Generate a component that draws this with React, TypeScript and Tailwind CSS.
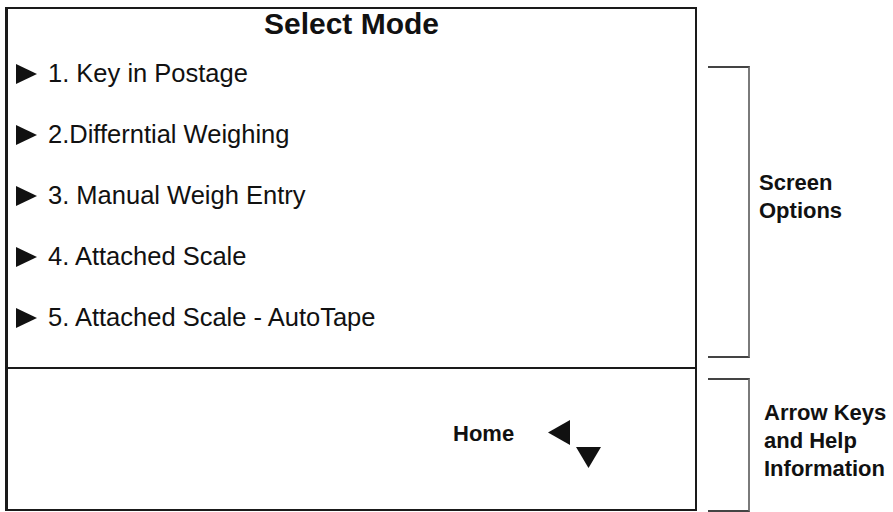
const items = [
  '1. Key in Postage',
  '2.Differntial Weighing',
  '3. Manual Weigh Entry',
  '4. Attached Scale',
  '5. Attached Scale - AutoTape',
];

const Pointer = () => (
  <svg width="21" height="20" viewBox="0 0 21 20" className="shrink-0">
    <polygon points="0,0 21,10 0,20" fill="#111" />
  </svg>
);

export default function App() {
  return (
    <div className="flex items-start w-[893px] h-[512px] bg-white overflow-hidden text-[#111] font-['Liberation_Sans',Arial,sans-serif]">
      {/* Device screen */}
      <div className="ml-[5px] mt-[7px] w-[692px] h-[504px] flex flex-col border-2 border-l-[3px] border-[#1a1a1a]">
        <div className="h-[360px] border-b-2 border-[#1a1a1a]">
          <h1 className="text-[30px] leading-[29px] font-bold text-center">Select Mode</h1>
          <ul className="mt-[5px] flex flex-col">
            {items.map((item) => (
              <li key={item} className="h-[61px] flex items-center gap-[11px] pl-[8px] text-[25.5px] leading-[61px]">
                <Pointer />
                <span>{item}</span>
              </li>
            ))}
          </ul>
        </div>

        {/* Help / arrow area */}
        <div className="flex-1 flex items-start pl-[445px] pt-[51px]">
          <span className="w-[95px] mt-[3px] text-[22px] leading-[22px] font-bold">Home</span>
          <svg width="53" height="48" viewBox="0 0 53 48">
            <polygon points="0,12.5 22,0 22,25" fill="#111" />
            <polygon points="28,27 53,27 40.5,48" fill="#111" />
          </svg>
        </div>
      </div>

      {/* Callouts */}
      <div className="flex flex-col">
        <div className="mt-[66px] flex items-start">
          <div className="ml-[11px] w-[42px] h-[292px] border-t-2 border-b-2 border-r-2 border-[#444] border-r-[#7a7a7a]" />
          <p className="ml-[9px] mt-[103px] text-[22px] leading-[28px] font-bold">
            Screen
            <br />
            Options
          </p>
        </div>
        <div className="mt-[20px] flex items-start">
          <div className="ml-[11px] w-[42px] h-[134px] border-t-2 border-b-2 border-r-2 border-[#444] border-r-[#7a7a7a]" />
          <p className="ml-[14px] mt-[21px] text-[22px] leading-[28px] font-bold whitespace-nowrap">
            Arrow Keys
            <br />
            and Help
            <br />
            Information
          </p>
        </div>
      </div>
    </div>
  );
}
